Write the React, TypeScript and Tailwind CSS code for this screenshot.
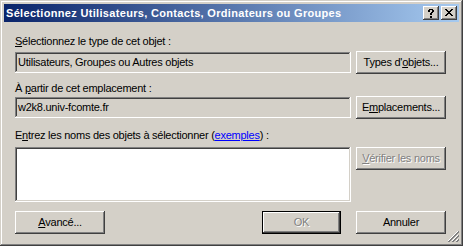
import React from "react";

const raised =
  "shadow-[inset_-1px_-1px_#404040,inset_1px_1px_#ffffff,inset_-2px_-2px_#808080,inset_2px_2px_#d4d0c8]";
const sunken =
  "shadow-[inset_-1px_-1px_#ffffff,inset_1px_1px_#808080,inset_-2px_-2px_#d4d0c8,inset_2px_2px_#404040]";

function Btn({
  children,
  w,
  disabled,
  def,
}: {
  children: React.ReactNode;
  w: string;
  disabled?: boolean;
  def?: boolean;
}) {
  const inner = (
    <div
      className={`flex items-center justify-center bg-[#d4d0c8] ${raised} ${
        def ? "h-[21px] w-full" : "h-[23px] " + w
      } ${disabled ? "text-[#808080] [text-shadow:1px_1px_0_#ffffff]" : "text-black"}`}
    >
      {children}
    </div>
  );
  if (def) {
    return <div className={`border border-black h-[23px] ${w}`}>{inner}</div>;
  }
  return inner;
}

function U({ children }: { children: React.ReactNode }) {
  return <span className="underline underline-offset-[1px] decoration-1">{children}</span>;
}

export default function App() {
  return (
    <div
      className="w-[463px] h-[246px] bg-[#d4d0c8] text-[11px] leading-[13px] tracking-[-0.25px] text-black shadow-[inset_-1px_-1px_#404040,inset_1px_1px_#d4d0c8,inset_-2px_-2px_#808080,inset_2px_2px_#ffffff] p-[4px] flex flex-col relative"
      style={{ fontFamily: '"Liberation Sans", Arial, sans-serif' }}
    >
      {/* Title bar */}
      <div className="h-[18px] flex items-center bg-[linear-gradient(to_right,#0a246a,#a6caf0)] pl-[2px] pr-[2px]">
        <div className="flex-1 text-white font-bold text-[11px] leading-[13px] tracking-[0.32px] whitespace-nowrap">
          Sélectionnez Utilisateurs, Contacts, Ordinateurs ou Groupes
        </div>
        <div className="flex items-center">
          <div className={`w-[16px] h-[14px] bg-[#d4d0c8] ${raised} flex items-center justify-center`}>
            <svg width="16" height="14" viewBox="0 0 16 14" shapeRendering="crispEdges">
              <path
                d="M6 3h4v1H6zM5 4h2v2H5zM9 4h2v2H9zM8 6h2v1H8zM7 7h2v2H7zM7 10h2v2H7z"
                fill="#000"
              />
            </svg>
          </div>
          <div className={`ml-[2px] w-[16px] h-[14px] bg-[#d4d0c8] ${raised} flex items-center justify-center`}>
            <svg width="16" height="14" viewBox="0 0 16 14" shapeRendering="crispEdges">
              <path
                d="M4 3h2v1H4zM10 3h2v1h-2zM5 4h2v1H5zM9 4h2v1H9zM6 5h4v1H6zM7 6h2v1H7zM6 7h4v1H6zM5 8h2v1H5zM9 8h2v1H9zM4 9h2v1H4zM10 9h2v1h-2z"
                fill="#000"
              />
            </svg>
          </div>
        </div>
      </div>

      {/* Content */}
      <div className="flex flex-col pl-[11px] pr-[13px]">
        <div className="mt-[13px] h-[13px] whitespace-nowrap">
          <U>S</U>électionnez le type de cet objet :
        </div>
        <div className="mt-[3px] flex items-center gap-[5px]">
          <div className={`w-[336px] h-[21px] ${sunken} bg-[#d4d0c8] flex items-center pl-[3px] whitespace-nowrap`}>
            Utilisateurs, Groupes ou Autres objets
          </div>
          <Btn w="w-[90px]">
            Types d'<U>o</U>bjets...
          </Btn>
        </div>

        <div className="mt-[8px] h-[13px] whitespace-nowrap">
          À <U>p</U>artir de cet emplacement :
        </div>
        <div className="mt-[1px] flex items-center gap-[5px]">
          <div className={`w-[336px] h-[21px] ${sunken} bg-[#d4d0c8] flex items-center pl-[3px] whitespace-nowrap`}>
            w2k8.univ-fcomte.fr
          </div>
          <Btn w="w-[90px]">
            E<U>m</U>placements...
          </Btn>
        </div>

        <div className="mt-[10px] h-[13px] whitespace-nowrap">
          E<U>n</U>trez les noms des objets à sélectionner (
          <span className="text-[#0000ff] underline underline-offset-[1px]">exemples</span>) :
        </div>
        <div className="mt-[5px] flex items-start gap-[5px]">
          <div className={`w-[336px] h-[55px] ${sunken} bg-white`} />
          <Btn w="w-[90px]" disabled>
            <U>V</U>érifier les noms
          </Btn>
        </div>

        <div className="mt-[9px] flex items-center">
          <Btn w="w-[90px]">
            <U>A</U>vancé...
          </Btn>
          <div className="flex-1" />
          <Btn w="w-[79px]" def disabled>
            OK
          </Btn>
          <div className="w-[15px]" />
          <Btn w="w-[90px]">Annuler</Btn>
        </div>
      </div>

      {/* Resize grip */}
      <svg
        className="absolute right-[4px] bottom-[4px]"
        width="12"
        height="12"
        viewBox="0 0 12 12"
        shapeRendering="crispEdges"
      >
        <g strokeWidth="1">
          <line x1="11" y1="1" x2="1" y2="11" stroke="#ffffff" />
          <line x1="12" y1="1" x2="1" y2="12" stroke="#808080" />
          <line x1="12" y1="2" x2="2" y2="12" stroke="#808080" />
          <line x1="11" y1="5" x2="5" y2="11" stroke="#ffffff" />
          <line x1="12" y1="5" x2="5" y2="12" stroke="#808080" />
          <line x1="12" y1="6" x2="6" y2="12" stroke="#808080" />
          <line x1="11" y1="9" x2="9" y2="11" stroke="#ffffff" />
          <line x1="12" y1="9" x2="9" y2="12" stroke="#808080" />
          <line x1="12" y1="10" x2="10" y2="12" stroke="#808080" />
        </g>
      </svg>
    </div>
  );
}
